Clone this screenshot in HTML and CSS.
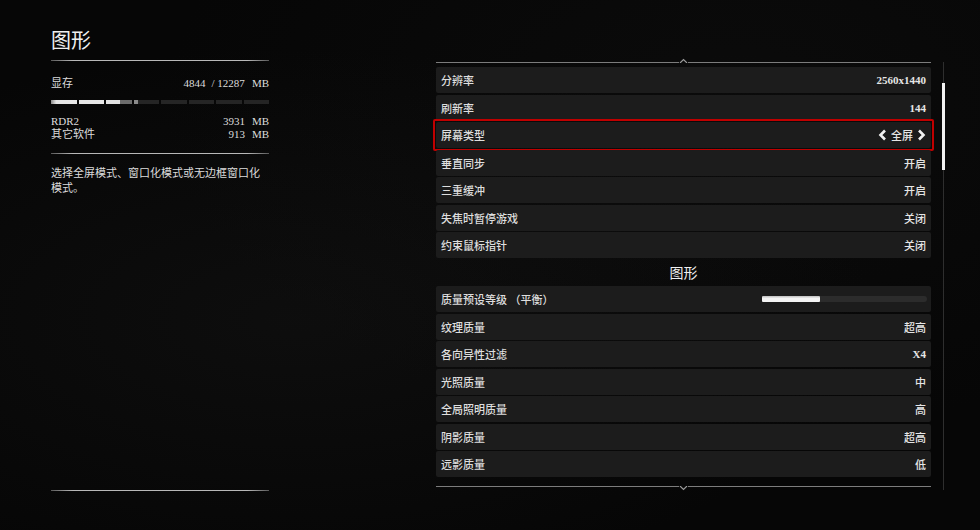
FILE: index.html
```html
<!DOCTYPE html>
<html lang="zh-CN">
<head>
<meta charset="utf-8">
<title>图形设置</title>
<link rel="stylesheet" href="styles.css">
</head>
<body>
<div class="screen">
  <aside class="left">
    <h1 class="title">图形</h1>
    <div class="rule"></div>
    <div class="kv mem">
      <span>显存</span>
      <span class="nums"><span>4844</span><span class="total">/ 12287</span><span class="unit">MB</span></span>
    </div>
    <div class="membar">
      <div class="seg full first"></div>
      <div class="seg full"></div>
      <div class="seg s3"></div>
      <div class="seg s4"></div>
      <div class="seg"></div>
      <div class="seg"></div>
      <div class="seg"></div>
      <div class="seg"></div>
    </div>
    <div class="usage">
      <div class="kv"><span>RDR2</span><span class="nums"><span>3931</span><span class="unit">MB</span></span></div>
      <div class="kv"><span>其它软件</span><span class="nums"><span>913</span><span class="unit">MB</span></span></div>
    </div>
    <div class="rule r2"></div>
    <p class="desc">选择全屏模式、窗口化模式或无边框窗口化<br>模式。</p>
    <div class="rule bottom"></div>
  </aside>

  <main class="list">
    <div class="edge top">
      <span class="line"></span>
      <svg class="caret" width="9" height="5" viewBox="0 0 9 5"><polyline points="1,5 4.5,1.5 8,5" fill="none" stroke="#9a9a9a" stroke-width="1.2"/></svg>
      <span class="line"></span>
    </div>
    <div class="rows">
      <div class="row"><span class="lbl">分辨率</span><span class="val num">2560x1440</span></div>
      <div class="row"><span class="lbl">刷新率</span><span class="val num">144</span></div>
      <div class="row sel"><span class="lbl">屏幕类型</span>
        <span class="val pick">
          <svg class="chev" width="9" height="12" viewBox="0 0 9 12"><polyline points="7,1.5 2.5,6 7,10.5" fill="none" stroke="#f2f2f2" stroke-width="2.6"/></svg>
          <span>全屏</span>
          <svg class="chev" width="9" height="12" viewBox="0 0 9 12"><polyline points="2,1.5 6.5,6 2,10.5" fill="none" stroke="#f2f2f2" stroke-width="2.6"/></svg>
        </span>
      </div>
      <div class="row"><span class="lbl">垂直同步</span><span class="val">开启</span></div>
      <div class="row"><span class="lbl">三重缓冲</span><span class="val">开启</span></div>
      <div class="row"><span class="lbl">失焦时暂停游戏</span><span class="val">关闭</span></div>
      <div class="row"><span class="lbl">约束鼠标指针</span><span class="val">关闭</span></div>
      <div class="section">图形</div>
      <div class="row"><span class="lbl">质量预设等级 （平衡）</span><span class="slider"><span class="fill"></span></span></div>
      <div class="row"><span class="lbl">纹理质量</span><span class="val">超高</span></div>
      <div class="row"><span class="lbl">各向异性过滤</span><span class="val num">X4</span></div>
      <div class="row"><span class="lbl">光照质量</span><span class="val">中</span></div>
      <div class="row"><span class="lbl">全局照明质量</span><span class="val">高</span></div>
      <div class="row"><span class="lbl">阴影质量</span><span class="val">超高</span></div>
      <div class="row"><span class="lbl">远影质量</span><span class="val">低</span></div>
    </div>
    <div class="edge bottom">
      <span class="line"></span>
      <svg class="caret" width="9" height="5" viewBox="0 0 9 5"><polyline points="1,0 4.5,3.5 8,0" fill="none" stroke="#9a9a9a" stroke-width="1.2"/></svg>
      <span class="line"></span>
    </div>
  </main>

  <div class="scroll"><div class="thumb"></div></div>
</div>
</body>
</html>
```

FILE: styles.css
```css
* { box-sizing: border-box; }

html, body {
  margin: 0;
  padding: 0;
}

body {
  width: 980px;
  height: 530px;
  overflow: hidden;
  background: #070707;
  color: #e2e2e2;
  font-family: "Liberation Serif", "Noto Sans CJK SC", serif;
  font-size: 11px;
}

.screen {
  display: flex;
  height: 530px;
  background:
    radial-gradient(ellipse at 30% 60%, rgba(40,40,40,0.22), rgba(0,0,0,0) 60%),
    radial-gradient(ellipse at 75% 20%, rgba(30,30,30,0.2), rgba(0,0,0,0) 55%),
    #060606;
}

/* ---------- left panel ---------- */
.left {
  width: 218px;
  margin-left: 51px;
  padding-top: 28px;
  padding-bottom: 39px;
  display: flex;
  flex-direction: column;
}

.title {
  margin: 0;
  font-family: "Noto Sans CJK SC", sans-serif;
  font-weight: 400;
  font-size: 20px;
  line-height: 24px;
  color: #f0f0f0;
  margin-bottom: 8px;
}

.rule {
  height: 1px;
  background: linear-gradient(90deg, #5a5a5a, #b8b8b8 10%, #b8b8b8 90%, #5a5a5a);
}

.kv {
  display: flex;
  justify-content: space-between;
  line-height: 13px;
  color: #dcdcdc;
}

.kv.mem {
  margin-top: 14.5px;
  line-height: 14px;
}

.nums {
  display: flex;
}

.nums .total { margin-left: 6px; }
.nums .unit { margin-left: 7px; }

.membar {
  margin-top: 10.5px;
  height: 4px;
  display: grid;
  grid-template-columns: repeat(8, 1fr);
  gap: 2px;
}

.seg {
  background: #252525;
}

.seg.full { background: #e6e6e6; }
.seg.first { background: linear-gradient(90deg, #8a8a8a, #e6e6e6 20%); }
.seg.s3 { background: linear-gradient(90deg, #e2e2e2 0 55%, #6c6c6c 55% 100%); }
.seg.s4 { background: linear-gradient(90deg, #8a8a8a 0 16%, #252525 16% 100%); }

.usage {
  margin-top: 11px;
}

.rule.r2 { margin-top: 12px; }

.desc {
  margin: 12px 0 0;
  line-height: 14.5px;
  color: #dcdcdc;
}

.rule.bottom { margin-top: auto; }

/* ---------- right list ---------- */
.list {
  width: 495px;
  margin-left: 167px;
  padding-top: 58px;
  display: flex;
  flex-direction: column;
}

.edge {
  display: flex;
  height: 5px;
}

.edge.top { align-items: flex-end; }
.edge.bottom { align-items: flex-start; margin-top: 9px; }

.edge .line {
  flex: 1;
  height: 1px;
  background: #7c7c7c;
}

.edge .caret { display: block; flex: none; }

.rows {
  margin-top: 4px;
  display: flex;
  flex-direction: column;
  gap: 1.5px;
}

.row {
  position: relative;
  height: 26px;
  display: flex;
  align-items: center;
  justify-content: space-between;
  padding: 0 5px;
  background: #1c1c1c;
  border-radius: 2px;
}

.lbl {
  color: #dedede;
  font-family: "Noto Sans CJK SC", sans-serif;
  font-weight: 500;
}

.val {
  color: #e6e6e6;
  font-family: "Liberation Serif", "Noto Sans CJK SC", serif;
  font-weight: 500;
}

.val.num { font-weight: 700; }

.row.sel::after {
  content: "";
  position: absolute;
  top: -3px;
  bottom: -3px;
  left: -3px;
  right: -3px;
  border: 2px solid #c00000;
  border-radius: 2px;
}

.pick {
  display: flex;
  align-items: center;
  gap: 4px;
}

.chev { display: block; }

.section {
  height: 25px;
  display: flex;
  align-items: center;
  justify-content: center;
  font-family: "Noto Sans CJK SC", sans-serif;
  font-size: 14px;
  color: #f0f0f0;
}

.slider {
  width: 165px;
  height: 6px;
  margin-right: -1px;
  background: #2c2c2c;
  border-radius: 3px;
  display: flex;
}

.slider .fill {
  width: 58px;
  background: linear-gradient(#bdbdbd, #f4f4f4 40%);
  border-radius: 1px;
}

/* ---------- scrollbar ---------- */
.scroll {
  width: 3px;
  margin-left: 11px;
  margin-top: 62px;
  height: 428px;
  background: linear-gradient(90deg, transparent 1px, #2e2e2e 1px 2px, transparent 2px);
  display: flex;
  flex-direction: column;
}

.thumb {
  margin-top: 21px;
  height: 87px;
  background: #f2f2f2;
}
```
